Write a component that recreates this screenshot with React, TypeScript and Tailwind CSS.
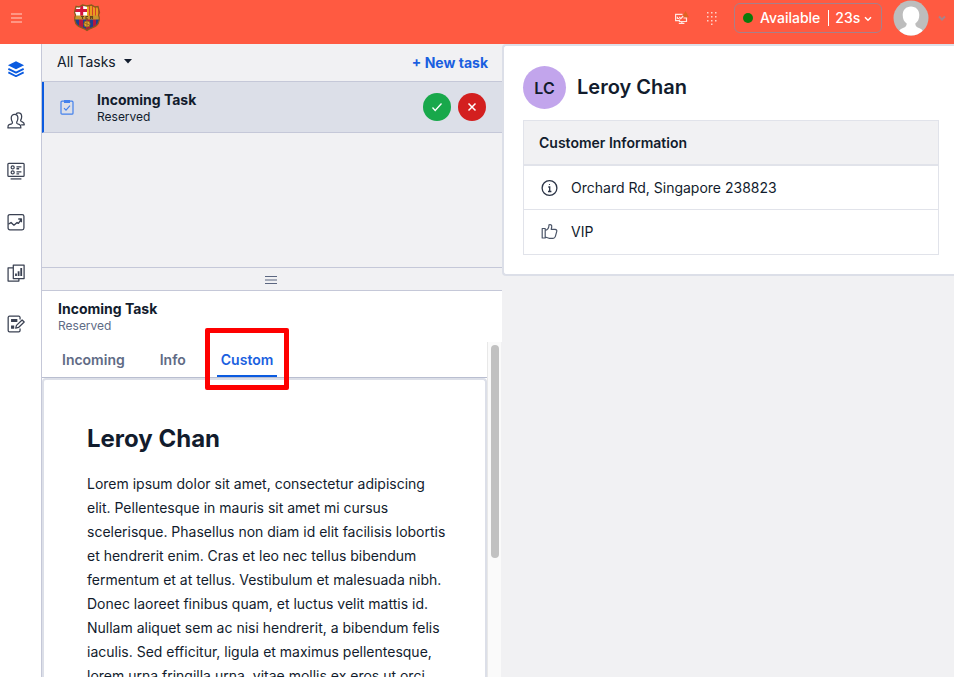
import React from "react";

const navItems = [
  {
    label: "Agent desktop",
    active: true,
    icon: (
      <>
        <path d="M10 1.400 19 5.900 10 10.400 1 5.900Z" fill="currentColor" stroke="none" />
        <path d="M1.500 9.800 10 14 18.500 9.800M1.500 13.800 10 18 18.500 13.800" strokeWidth="2" />
      </>
    ),
  },
  {
    label: "Teams",
    active: false,
    icon: (
      <>
        <path d="M5.200 14.200c.8-.4 1.200-1 .7-2.200C5 10.800 4.700 9.400 4.700 7.800 4.700 5.400 6.200 3.800 8.400 3.800s3.700 1.600 3.700 4c0 1.600-.3 3-1.200 4.200-.5 1.200-.1 1.800.7 2.200l2.500 1c1 .5 1.300 1.600 1.300 3.600H1c0-2 .3-3.100 1.300-3.600Z" />
        <path d="M10 3.200c.7-.8 1.600-1.200 2.600-1.200 2.200 0 3.700 1.600 3.700 4 0 1.500-.3 2.700-1 3.800-.5 1 0 1.500.7 1.900l1.500.7c1.200.5 1.700 1.300 1.700 3h-3.500" />
      </>
    ),
  },
  {
    label: "Queues view",
    active: false,
    icon: (
      <>
        <rect x="1" y="1.500" width="18" height="14.500" rx="1" />
        <path d="M4 18.800h12" />
        <circle cx="6.300" cy="6" r="1.700" />
        <circle cx="6.300" cy="11.600" r="1.700" />
        <path d="M10.500 5.300H16M10.500 7.500h3M10.500 10.900H16M10.500 13.100h3" />
      </>
    ),
  },
  {
    label: "Insights",
    active: false,
    icon: (
      <>
        <rect x="1.200" y="1.700" width="17.600" height="17" rx="2" />
        <path d="M1.500 12.500 4.500 10.500l3.200 3 3.500-3 1.500 1 3.300-4.800M12.500 6.700H16v3.500" strokeWidth="1.500" />
      </>
    ),
  },
  {
    label: "Dashboards",
    active: false,
    icon: (
      <>
        <path d="M7 1.200h12v15H7ZM7 4.200H1.200v14.800h12v-2.500" />
        <path d="M10 10.500v2.900M12.900 8v5.400M15.800 4.500v8.900" strokeWidth="2" />
      </>
    ),
  },
  {
    label: "Questionnaires",
    active: false,
    icon: (
      <>
        <path d="M14.500 5V2.900c0-1-.5-1.600-1.500-1.600H2.800c-1 0-1.500.6-1.500 1.600v14.200c0 1 .5 1.600 1.500 1.600H13c1 0 1.500-.6 1.500-1.600V15" />
        <path d="M4.500 6.200h7M4.500 13.500h3.500" strokeWidth="3.400" />
        <path d="m9.700 14.500.8-3 6.300-6 2.300 2.300-6.300 6Z" />
      </>
    ),
  },
];

function ClubCrest() {
  return (
    <svg viewBox="0 0 28 29" className="h-[29px] w-7" role="img" aria-label="Club crest">
      <defs>
        <clipPath id="crest">
          <path d="M3 2.500 6 3 9.500 1l4.500 1 4.500-1L22 3l3-.5 1.500 6L25.500 11c1.500 3 1 8-2 10.500-2.500 2.200-6.500 2.600-9.500 5-3-2.400-7-2.800-9.500-5C1.500 19 1 14 2.500 11L1.500 8.500Z" />
        </clipPath>
      </defs>
      <g clipPath="url(#crest)">
        <path fill="#b31742" d="M0 0h28v29H0z" />
        <path fill="#fff" d="M0 0h14v12H0z" />
        <path fill="#d4143c" d="M7.200 0h3v12h-3zM2 5h12v3H2z" />
        <path fill="#efb21e" d="M14 0h14v12H14z" />
        <path stroke="#d5402b" strokeWidth="1.400" d="M16.500 0v12M19.500 0v12M22.500 0v12M25.500 0v12" />
        <path fill="#203f8e" d="M2 15h4v14H2zM10 15h3v14h-3zM17 15h3v14h-3zM23 15h3v14h-3z" />
        <path fill="#c9952d" d="M0 11.500h28v4H0z" />
        <path stroke="#65431d" strokeWidth="1.100" fill="none" d="M8 12.500h3M9.500 12.500V15M15 12.500h-2V15h2M17.500 15v-2.500h2V15M17.500 13.700h2" />
        <circle cx="14" cy="20" r="3.200" fill="#e2a42b" stroke="#754c24" strokeWidth=".7" />
        <path stroke="#754c24" strokeWidth=".6" d="m11.500 19 5 2M14 17v6" />
      </g>
      <path d="M3 2.500 6 3 9.500 1l4.500 1 4.500-1L22 3l3-.5 1.500 6L25.500 11c1.500 3 1 8-2 10.500-2.500 2.200-6.500 2.600-9.500 5-3-2.400-7-2.800-9.500-5C1.500 19 1 14 2.500 11L1.500 8.500Z" fill="none" stroke="#8b5a1d" strokeWidth="1.300" />
    </svg>
  );
}

function TopBar() {
  return (
    <header className="flex h-11 shrink-0 items-center bg-[#ff5a41] pb-2 text-white">
      <button aria-label="Toggle menu" className="ml-[11px]">
        <svg viewBox="0 0 11 10" className="h-[10px] w-[11px]" stroke="#ffd2c8" strokeWidth="1.200">
          <path d="M0 1h11M0 5h11M0 9h11" />
        </svg>
      </button>
      <div className="ml-[51px]">
        <ClubCrest />
      </div>
      <div className="ml-auto flex items-center">
        <button aria-label="Device status" className="mr-[17px]">
          <svg viewBox="0 0 15 15" className="h-[15px] w-[15px]" fill="none" stroke="#ffe6e0" strokeWidth="1.200">
            <path d="m11.500 0 3.500 6.200H8Z" fill="#df6422" stroke="none" />
            <path d="M8.500 3.300H1.600v6.400h3.800M3.400 5.800v1.700h1.800M5.200 6l1.600 1.600L9.200 5" />
            <path d="M9.500 7h3v3.500h-7V8.500M4.800 12.400h5.600M7.800 10.500v2" />
          </svg>
        </button>
        <button aria-label="Dial pad" className="mr-4">
          <svg viewBox="0 0 12 14" className="h-[14px] w-3" fill="#ffd2c8">
            {[1, 5, 9].map((y) => (
              <g key={y}>
                <rect x="1" y={y} width="1.500" height="1.500" />
                <rect x="5" y={y} width="1.500" height="1.500" />
                <rect x="9" y={y} width="1.500" height="1.500" />
              </g>
            ))}
            <rect x="5" y="12.500" width="1.500" height="1.500" />
          </svg>
        </button>
        <button className="flex h-[30px] w-[148px] items-center rounded-md border border-[#a87f8a] pl-2 text-sm font-medium whitespace-nowrap">
          <span className="mr-[7px] h-2.5 w-2.5 rounded-full bg-[#0b7a0b]" />
          Available
          <span className="mr-1.5 ml-2 h-4 w-px bg-white" />
          23s
          <svg viewBox="0 0 8 6" className="mt-px ml-1 h-1.5 w-2" fill="none" stroke="currentColor" strokeWidth="1.500">
            <path d="m1 1.200 3 3 3-3" />
          </svg>
        </button>
        <button aria-label="User menu" className="mr-2 ml-[11px] flex items-center">
          <svg viewBox="0 0 36 36" className="h-9 w-9">
            <clipPath id="avatar">
              <circle cx="18" cy="18" r="17.500" />
            </clipPath>
            <g clipPath="url(#avatar)">
              <path fill="#bdbdbd" d="M0 0h36v36H0z" />
              <path fill="#fff" d="M18 6.500c5 0 8.300 3.500 8.300 8.500 0 4-1.500 7-4 8.500 0 2.500 1 3.500 3.700 4.500 3 1.200 4.500 2.500 5 8H5c.5-5.500 2-6.800 5-8 2.700-1 3.700-2 3.700-4.500-2.500-1.500-4-4.500-4-8.500 0-5 3.300-8.500 8.300-8.500Z" />
            </g>
          </svg>
          <svg viewBox="0 0 8 6" className="ml-[9px] h-1.5 w-2" fill="none" stroke="#a8838b" strokeWidth="2">
            <path d="m1 1.500 3 3 3-3" />
          </svg>
        </button>
      </div>
    </header>
  );
}

function SideNav() {
  return (
    <nav className="flex flex-col gap-[33px] border-r border-[#c5c8d8] bg-white pt-4 pl-[7px]">
      {navItems.map((item) => (
        <a
          key={item.label}
          href="#"
          aria-label={item.label}
          className={item.active ? "w-[18px] text-[#0b5be0]" : "w-[18px] text-[#3a4152]"}
        >
          <svg viewBox="0 0 20 20" className="h-[18px] w-[18px]" fill="none" stroke="currentColor" strokeWidth="1.400" strokeLinejoin="round">
            {item.icon}
          </svg>
        </a>
      ))}
    </nav>
  );
}

function TaskList() {
  return (
    <section className="h-[223px] shrink-0">
      <div className="flex h-[38px] items-center justify-between border-b border-[#c5c8d8] pr-3.5 pl-[15px] text-sm">
        <div className="relative flex items-center pb-0.5">
          <select aria-label="Filter tasks" className="h-6 appearance-none bg-transparent pr-4 outline-none">
            <option>All Tasks</option>
          </select>
          <svg viewBox="0 0 8 5" className="pointer-events-none absolute right-0 h-[5px] w-2">
            <path fill="#121c2d" d="M0 0h8L4 4.600Z" />
          </svg>
        </div>
        <button className="font-bold text-[#1a5fe0]">+ New task</button>
      </div>
      <div className="flex h-[51px] items-center border-b border-l-2 border-b-[#c5c8d8] border-l-[#0b5be0] bg-[#dcdfe8] pr-4">
        <svg viewBox="0 0 14 16" className="ml-4 h-4 w-3.5" fill="none" stroke="#4381ec" strokeWidth="1.200">
          <rect x="1" y="2.200" width="12" height="13" rx="1" />
          <path d="M4 1h6v3H4Z" fill="#4381ec" stroke="none" />
          <path d="m4 9.200 2 2 4-4.500" />
        </svg>
        <div className="ml-[23px] grow pt-0.5">
          <div className="text-sm leading-[18px] font-bold">Incoming Task</div>
          <div className="text-xs leading-4">Reserved</div>
        </div>
        <button aria-label="Accept task" className="flex h-7 w-7 items-center justify-center rounded-full bg-[#18a84b]">
          <svg viewBox="0 0 12 10" className="h-2.5 w-3" fill="none" stroke="#fff" strokeWidth="1.300">
            <path d="m1.500 5.500 2.700 3L10.500 1.500" />
          </svg>
        </button>
        <button aria-label="Reject task" className="ml-[7px] flex h-7 w-7 items-center justify-center rounded-full bg-[#d31f1f]">
          <svg viewBox="0 0 10 10" className="h-2.5 w-2.5" fill="none" stroke="#fff" strokeWidth="1.500">
            <path d="m1.500 1.500 7 7m0-7-7 7" />
          </svg>
        </button>
      </div>
    </section>
  );
}

function TaskDetail() {
  return (
    <section className="flex min-h-0 flex-1 flex-col bg-white">
      <div className="h-[51px] shrink-0 pt-[9px] pl-4">
        <h2 className="text-sm leading-[18px] font-bold">Incoming Task</h2>
        <p className="text-xs leading-4 text-[#606b85]">Reserved</p>
      </div>
      <div className="flex min-h-0 flex-1">
        <div className="flex min-w-0 flex-1 flex-col">
          <div role="tablist" className="flex h-9 shrink-0 gap-[27px] border-b border-[#b9bed0] pl-4 text-sm font-semibold text-[#606b85]">
            <button role="tab" aria-selected="false" className="px-1">
              Incoming
            </button>
            <button role="tab" aria-selected="false" className="px-1">
              Info
            </button>
            <button role="tab" aria-selected="true" className="relative border-b-2 border-[#0b5be0] px-1 pt-0.5 text-[#1a5fe0]">
              Custom
              <span className="pointer-events-none absolute -inset-x-3 -top-3.5 -bottom-[15px] rounded-xs border-5 border-[#fe0000]" />
            </button>
          </div>
          <article className="min-h-0 flex-1 overflow-hidden rounded-t border-2 border-b-0 border-[#dcdfe8] pt-[43px] pr-[37px] pl-[43px]">
            <h3 className="text-2xl leading-8 font-bold">Leroy Chan</h3>
            <p className="mt-[17px] text-sm leading-6">
              Lorem ipsum dolor sit amet, consectetur adipiscing elit. Pellentesque in mauris sit amet mi cursus
              scelerisque. Phasellus non diam id elit facilisis lobortis et hendrerit enim. Cras et leo nec tellus
              bibendum fermentum et at tellus. Vestibulum et malesuada nibh. Donec laoreet finibus quam, et luctus
              velit mattis id. Nullam aliquet sem ac nisi hendrerit, a bibendum felis iaculis. Sed efficitur, ligula
              et maximus pellentesque, lorem urna fringilla urna, vitae mollis ex eros ut orci
            </p>
          </article>
        </div>
        <div className="w-3.5 border-l border-[#e8e8e8] bg-[#fafafa] px-[3px] pt-[3px]">
          <div className="h-[213px] w-2 rounded-full bg-[#c1c1c1]" />
        </div>
        <div className="w-px bg-[#f1f1f3]" />
      </div>
    </section>
  );
}

function CustomerPanel() {
  return (
    <aside className="min-w-0">
      <section className="rounded-l border-2 border-r-0 border-[#dcdfe8] bg-white pt-5 pr-[15px] pb-[19px] pl-[19px]">
        <div className="flex items-center gap-[11px]">
          <div className="flex h-[43px] w-[43px] items-center justify-center rounded-full bg-[#c2a5ec] text-base font-semibold">
            LC
          </div>
          <h1 className="pb-0.5 text-xl font-semibold">Leroy Chan</h1>
        </div>
        <div className="mt-[11px] border border-[#e1e3ea]">
          <h2 className="flex h-[45px] items-center border-b-2 border-[#e1e3ea] bg-[#f1f1f3] pl-[15px] text-sm font-semibold">
            Customer Information
          </h2>
          <ul className="text-sm">
            <li className="flex h-11 items-center gap-3 border-b border-[#e1e3ea] pl-[17px]">
              <svg viewBox="0 0 18 18" className="h-[18px] w-[18px]" fill="none" stroke="#2a3345" strokeWidth="1.300">
                <circle cx="8.500" cy="9" r="7.400" />
                <path d="M7.300 8h1.400v4.500M7 12.500h3.400" />
                <circle cx="8.500" cy="5.500" r=".6" fill="#2a3345" stroke="none" />
              </svg>
              Orchard Rd, Singapore 238823
            </li>
            <li className="flex h-11 items-center gap-3 pl-[17px]">
              <svg viewBox="0 0 18 18" className="h-[18px] w-[18px]" fill="none" stroke="#4b5568" strokeWidth="1.200" strokeLinejoin="round">
                <path d="M1.200 5.500h3v9.500h-3ZM4.200 7.500C6.500 7 8 5 8 1.800c2-.8 3 .5 2.700 2.200L10.200 6.300H14c1.600.2 2.100 1.200 1.700 2.300l-1.400 5c-.4 1-1 1.700-2.200 1.700H8L4.200 14" />
              </svg>
              VIP
            </li>
          </ul>
        </div>
      </section>
    </aside>
  );
}

export default function App() {
  return (
    <div className="flex h-screen flex-col overflow-hidden bg-white pb-0.5 font-['Inter','Liberation_Sans',sans-serif] text-[#121c2d]">
      <TopBar />
      <div className="grid min-h-0 flex-1 grid-cols-[42px_minmax(0,460fr)_minmax(0,452fr)] grid-rows-[minmax(0,1fr)] bg-[#f1f1f3]">
        <SideNav />
        <main className="flex min-h-0 flex-col">
          <TaskList />
          <button aria-label="Resize panels" className="flex h-6 shrink-0 items-center justify-center border-y border-[#c5c8d8] pt-0.5 pr-0.5">
            <svg viewBox="0 0 12 8" className="h-2 w-3" stroke="#5b6680" strokeWidth="1">
              <path d="M0 .5h12M0 4h12M0 7.500h12" />
            </svg>
          </button>
          <TaskDetail />
        </main>
        <CustomerPanel />
      </div>
    </div>
  );
}
